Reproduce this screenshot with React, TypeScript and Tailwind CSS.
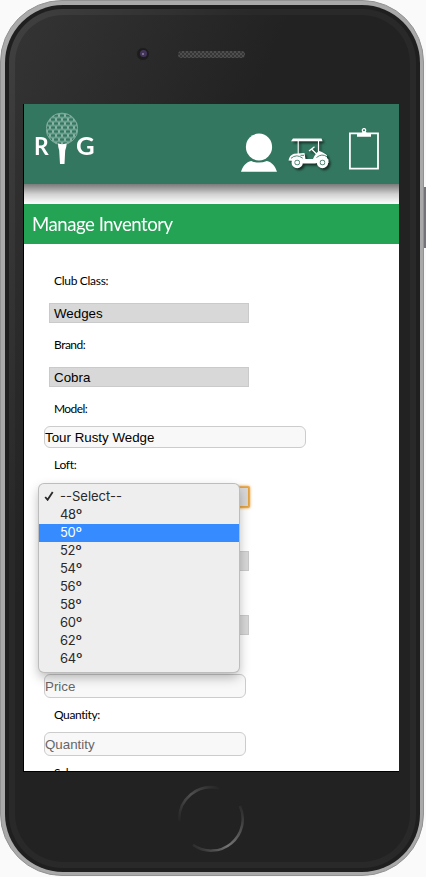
import React from "react";

function Logo() {
  return (
    <div className="flex h-[52px] w-[62px] items-start text-white">
      <span className="mt-[21px] w-[12px] font-['Lato'] text-[24px] leading-[26px] font-bold">
        <span className="inline-block origin-left scale-x-[0.95]">R</span>
      </span>
      <svg className="h-[52px] w-[32px] shrink-0" viewBox="0 -0.5 32 52">
        <defs>
          <pattern id="dimples" x="1" y="1" width="6" height="8" patternUnits="userSpaceOnUse">
            <rect width="6" height="8" fill="#78a999" />
            <ellipse cx="3" cy="2" rx="2.5" ry="1.5" fill="#347760" />
            <ellipse cx="0" cy="6" rx="2.5" ry="1.5" fill="#347760" />
            <ellipse cx="6" cy="6" rx="2.5" ry="1.5" fill="#347760" />
            <path d="M0 1.4 V2.6 M6 1.4 V2.6 M3 5.4 V6.6" stroke="#d9e8e2" strokeWidth="1.2" />
          </pattern>
        </defs>
        <circle cx="16" cy="16.4" r="15.8" fill="url(#dimples)" stroke="#7eab9b" strokeWidth="1" />
        <path d="M12 31 Q16 32.3 20.7 31 Q20.5 35 19.2 38 L18.5 51.5 H14 L13.2 38 Q12 35 12 31Z" fill="#fff" />
      </svg>
      <span className="mt-[21px] -ml-[2px] font-['Lato'] text-[24px] leading-[26px] font-bold">
        <span className="inline-block origin-left scale-x-[1.07]">G</span>
      </span>
    </div>
  );
}

function PersonIcon() {
  return (
    <svg className="h-[40px] w-[38px]" viewBox="0 0 38 40" fill="#fff">
      <ellipse cx="19" cy="15" rx="13.1" ry="13.4" />
      <path d="M1 39.8 C2.5 34.5 6.2 29.8 11.2 28.9 Q19 32.3 26.8 28.9 C31.8 29.8 35.5 34.5 37 39.8Z" />
    </svg>
  );
}

function CartIcon() {
  return (
    <svg
      className="h-[36px] w-[42px] drop-shadow-[2px_2px_1px_rgba(0,0,0,0.6)]"
      viewBox="-0.5 0.5 42 36"
      fill="none"
      stroke="#fff"
    >
      <path d="M4.5 1 H33 L34 3.8 H2.5Z" fill="#fff" stroke="none" />
      <path d="M9.7 3 V17 M30 3 V15" strokeWidth="1.1" />
      <path d="M20.5 13.5 L26 9.2 M23 11.5 L28.5 17" strokeWidth="1.3" />
      <path
        d="M0 23 Q1 17.5 5.5 16.2 L16 15.5 L17 21.5 H24.5 Q25.5 18.5 28.5 15 L30.8 13.5 Q36.5 15.5 38.5 18 V20.5 L40 22 V25.5 H29 L26.5 26 H14 L12 24Z"
        fill="#fff"
        stroke="none"
      />
      <path d="M12 17.8 H15.5 M28 20 Q33.5 15.5 38.5 19.3 M2.5 20.8 Q8 16 14.2 20.7" stroke="#347760" strokeWidth=".9" />
      <circle cx="8.7" cy="25" r="4.2" fill="#347760" strokeWidth="3" />
      <circle cx="8.7" cy="25" r="2" fill="#fff" stroke="none" />
      <circle cx="34" cy="25" r="4.2" fill="#347760" strokeWidth="3" />
      <circle cx="34" cy="25" r="2" fill="#fff" stroke="none" />
    </svg>
  );
}

function ClipboardIcon() {
  return (
    <svg className="h-[43px] w-[32px]" viewBox="0 0 32 43">
      <path d="M1.9 5.4 H30 V40.6 H1.9Z" fill="none" stroke="#fff" strokeWidth="1.8" />
      <path d="M9 8.7 V5 H13.5 L15 3.8 H17.5 L19 5 H23 V8.7Z" fill="#fff" />
      <circle cx="16" cy="2.3" r="1.7" fill="#347760" stroke="#fff" strokeWidth="1.3" />
    </svg>
  );
}

function Label({ text, className }: { text: string; className?: string }) {
  return (
    <div className="ml-[30px] h-5 font-['Lato'] text-[12px] leading-5 whitespace-nowrap text-black">
      <span className={className}>{text}</span>
    </div>
  );
}

function SelectBox({ value, focused }: { value?: string; focused?: boolean }) {
  return (
    <div
      className={
        "my-3 ml-[25px] h-5 w-[200px] border bg-[#d8d8d8] pl-1 font-['Liberation_Sans'] text-[13.33px] leading-[19px] text-black " +
        (focused
          ? "rounded-[1px] border-[#e3a23f] shadow-[0_0_0_1px_#e9ac55,0_0_3px_1px_#e59b32]"
          : "border-[#cacaca]")
      }
    >
      {value}
    </div>
  );
}

function Field({ value, className }: { value: string; className: string }) {
  return (
    <div
      className={
        "my-[7px] ml-5 flex items-center rounded-[6px] border border-[#cccccc] bg-[#f8f8f8] pt-px font-['Liberation_Sans'] text-[13.33px] leading-none " +
        className
      }
    >
      {value}
    </div>
  );
}

const lofts = ["--Select--", "48º", "50º", "52º", "54º", "56º", "58º", "60º", "62º", "64º"];

function LoftMenu() {
  return (
    <div className="absolute top-[380px] left-[15px] w-[200px] rounded-[5px] bg-[#eeeeee] py-1 shadow-[0_0_0_1px_#bdbdbd,0_5px_12px_rgba(0,0,0,0.3)]">
      {lofts.map((loft, i) => (
        <div
          key={loft}
          className={
            "flex h-[18px] items-center pb-[2px] font-['Inter'] text-[13px] leading-[16px] " +
            (i === 2 ? "bg-[#368cff] text-white" : "text-[#292929]")
          }
        >
          <span className="w-[21px] pl-[5px]">
            {i === 0 && (
              <svg className="h-[10px] w-[10px]" viewBox="0 0 10 10">
                <path d="M1.2 6 L3.6 8.8 L8.7 .9" fill="none" stroke="#292929" strokeWidth="1.8" />
              </svg>
            )}
          </span>
          {i === 0 ? (
            <span>{loft}</span>
          ) : (
            <span className="flex tracking-[-0.3px]">
              {loft.slice(0, 2)}
              <span className="text-[14.5px]">{loft.slice(2)}</span>
            </span>
          )}
        </div>
      ))}
    </div>
  );
}

function Screen() {
  return (
    <div className="relative h-[667px] w-[375px] overflow-hidden bg-white">
      <header className="flex h-20 bg-[#347760]">
        <div className="pt-2 pl-[10px]">
          <Logo />
        </div>
        <div className="ml-[144px] pt-[28px]">
          <PersonIcon />
        </div>
        <div className="ml-[10px] pt-[34px]">
          <CartIcon />
        </div>
        <div className="ml-[18px] pt-[24px]">
          <ClipboardIcon />
        </div>
      </header>
      <div className="h-5 bg-linear-to-b from-[#7a7a7a] via-[#d0d0d0] to-white" />
      <h1 className="h-10 bg-[#24a355] pl-2 font-['Lato'] text-[20px] leading-[39px] whitespace-nowrap text-white">
        <span className="inline-block origin-left scale-x-[0.93] tracking-[-0.5px]">Manage Inventory</span>
      </h1>
      <form className="pt-[27px]">
        <Label text="Club Class:" className="tracking-[-0.3px]" />
        <SelectBox value="Wedges" />
        <Label text="Brand:" className="tracking-[-0.5px]" />
        <SelectBox value="Cobra" />
        <Label text="Model:" className="tracking-[-0.6px]" />
        <Field value="Tour Rusty Wedge" className="h-[22px] w-[262px] text-black" />
        <Label text="Loft:" className="tracking-[-0.3px]" />
        <SelectBox focused />
        <div className="h-5" />
        <SelectBox />
        <div className="h-5" />
        <SelectBox />
        <div className="h-5" />
        <Field value="Price" className="h-6 w-[202px] text-[#666666]" />
        <Label text="Quantity:" className="tracking-[-0.4px]" />
        <Field value="Quantity" className="h-6 w-[202px] text-[#666666]" />
        <Label text="Sale:" className="tracking-[-0.3px]" />
      </form>
      <LoftMenu />
    </div>
  );
}

function HomeButton() {
  return (
    <svg className="h-[68px] w-[68px]" viewBox="0 0 68 68" fill="none" strokeWidth="2.5">
      <defs>
        <linearGradient id="upper" x1="0" y1="36" x2="42" y2="0" gradientUnits="userSpaceOnUse">
          <stop offset="0" stopColor="#222" />
          <stop offset=".5" stopColor="#4f4f4f" />
          <stop offset="1" stopColor="#222" />
        </linearGradient>
        <linearGradient id="lower" x1="16" y1="66" x2="66" y2="16" gradientUnits="userSpaceOnUse">
          <stop offset="0" stopColor="#222" />
          <stop offset=".4" stopColor="#757575" />
          <stop offset="1" stopColor="#222" />
        </linearGradient>
      </defs>
      <path d="M2.3 36 A31.7 31.7 0 0 1 42 3.3" stroke="url(#upper)" />
      <path d="M63 21 A31.7 31.7 0 0 1 16 60" stroke="url(#lower)" />
    </svg>
  );
}

export default function App() {
  return (
    <div className="relative h-[877px] w-[426px] overflow-hidden bg-[#fafafa]">
      <div className="absolute top-[187px] right-0 h-[61px] w-[4px] bg-[#74747a]" />
      <div className="relative h-[876px] w-[424px] rounded-[62px] border border-[#929292] bg-[#a9a9a9] p-[3.5px]">
        <div className="h-full rounded-[58px] bg-[#1f1f1f] p-[4px]">
          <div className="h-full rounded-[54px] bg-linear-to-br from-[#414141] via-[#292929] via-30% to-[#292929] p-[6px]">
            <div className="flex h-full flex-col rounded-[48px] bg-linear-[115deg] from-[#343434] to-[#222222] to-35% pl-[8.5px]">
              <div className="flex h-[89.5px] items-start pt-[32px]">
                <div className="ml-[113px] flex h-[14px] w-[14px] items-center justify-center rounded-full border border-[#2b2b2b] bg-[#1c1c1c]">
                  <div className="flex h-[7px] w-[7px] items-center justify-center rounded-full bg-[#42345b]">
                    <div className="h-[2px] w-[2px] rounded-full bg-[#91849e]" />
                  </div>
                </div>
                <div className="mt-[4px] ml-[28px] h-[7px] w-[67px] rounded-full bg-[repeating-conic-gradient(#363636_0_25%,#4e4e4e_0_50%)] bg-[size:4px_4px]" />
              </div>
              <div className="w-[376px] border-b border-l border-black">
                <Screen />
              </div>
              <div className="mt-[13px] ml-[154px]">
                <HomeButton />
              </div>
            </div>
          </div>
        </div>
      </div>
    </div>
  );
}
